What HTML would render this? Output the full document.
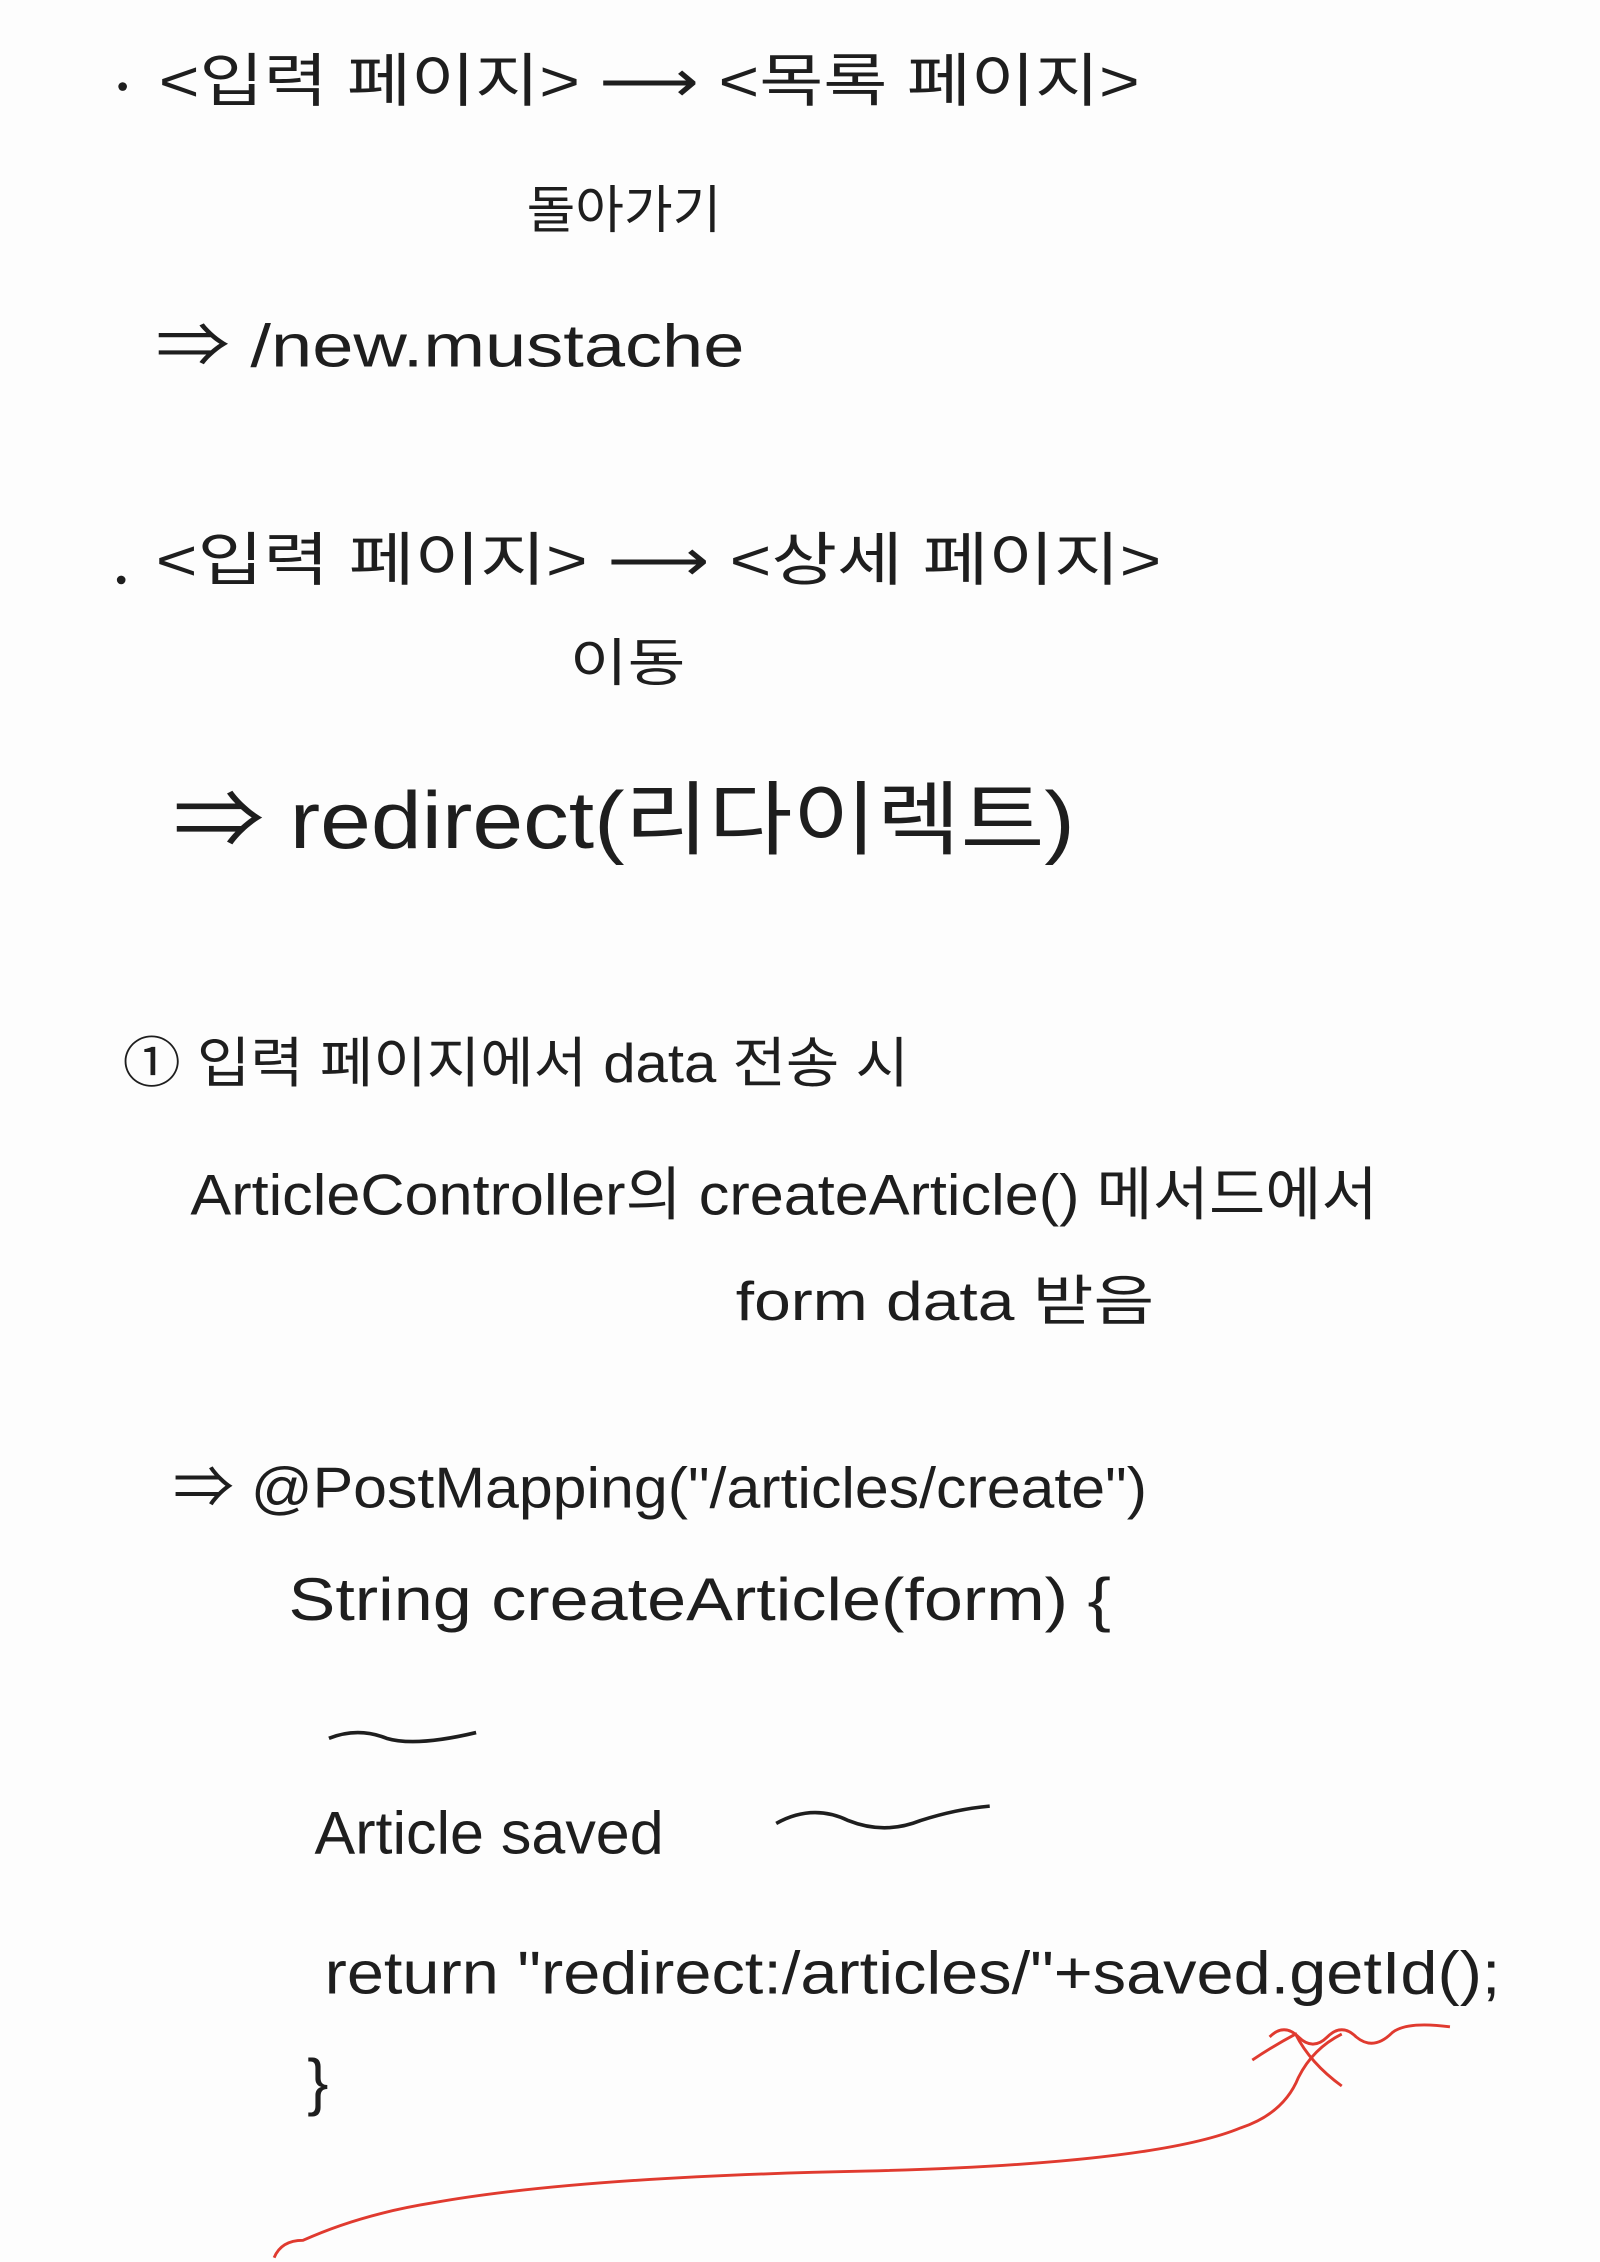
<!DOCTYPE html>
<html><head><meta charset="utf-8"><style>
html,body{margin:0;padding:0;background:#fdfdfd;}
svg{display:block}
text{font-family:"Liberation Sans","Noto Sans CJK KR",sans-serif;fill:#1e1e1e;font-weight:normal}
</style></head><body>
<svg width="1600" height="2262" viewBox="0 0 1109 1568" preserveAspectRatio="none" xmlns="http://www.w3.org/2000/svg">
<rect width="1109" height="1568" fill="#fdfdfd"/>
<circle cx="85" cy="60" r="3" fill="#1e1e1e"/>
<text x="110" y="70" font-size="40" textLength="680" lengthAdjust="spacingAndGlyphs">&lt;입력 페이지&gt; ⟶ &lt;목록 페이지&gt;</text>
<text x="365" y="158" font-size="36" textLength="135" lengthAdjust="spacingAndGlyphs">돌아가기</text>
<text x="108" y="254" font-size="42" textLength="408" lengthAdjust="spacingAndGlyphs">⇒ /new.mustache</text>
<circle cx="84" cy="402" r="3" fill="#1e1e1e"/>
<text x="108" y="402" font-size="40" textLength="697" lengthAdjust="spacingAndGlyphs">&lt;입력 페이지&gt; ⟶ &lt;상세 페이지&gt;</text>
<text x="395" y="472" font-size="36" textLength="80" lengthAdjust="spacingAndGlyphs">이동</text>
<text x="120" y="588" font-size="56" textLength="625" lengthAdjust="spacingAndGlyphs">⇒ redirect(리다이렉트)</text>
<text x="85" y="750" font-size="38" textLength="545" lengthAdjust="spacingAndGlyphs">① 입력 페이지에서 data 전송 시</text>
<text x="132" y="842" font-size="40" textLength="823" lengthAdjust="spacingAndGlyphs">ArticleController의 createArticle() 메서드에서</text>
<text x="510" y="915" font-size="38" textLength="290" lengthAdjust="spacingAndGlyphs">form data 받음</text>
<text x="120" y="1045" font-size="40" textLength="675" lengthAdjust="spacingAndGlyphs">⇒ @PostMapping("/articles/create")</text>
<text x="200" y="1123" font-size="42" textLength="570" lengthAdjust="spacingAndGlyphs">String createArticle(form) {</text>
<path d="M228 1205 q20 -8 40 0 q20 6 62 -4" stroke="#1e1e1e" stroke-width="2.5" fill="none"/>
<text x="218" y="1285" font-size="42" textLength="242" lengthAdjust="spacingAndGlyphs">Article saved</text>
<path d="M538 1264 q25 -14 50 -2 q25 10 50 0 q25 -8 48 -10" stroke="#1e1e1e" stroke-width="2.5" fill="none"/>
<text x="225" y="1382" font-size="42" textLength="815" lengthAdjust="spacingAndGlyphs">return "redirect:/articles/"+saved.getId();</text>
<text x="213" y="1458" font-size="44">}</text>
<path d="M880 1412 q10 -10 20 0 q10 10 20 0 q10 -10 20 0 q12 10 25 -3 q10 -8 40 -4" stroke="#e03a2f" stroke-width="2" fill="none"/>
<path d="M190 1565 q5 -12 20 -12 q40 -18 90 -26 q100 -18 300 -22 q200 -5 260 -30 q30 -10 40 -35 q10 -20 30 -30" stroke="#e03a2f" stroke-width="2" fill="none"/>
<path d="M868 1428 q15 -10 30 -18 q10 20 32 36" stroke="#e03a2f" stroke-width="2" fill="none"/>
</svg>
</body></html>
